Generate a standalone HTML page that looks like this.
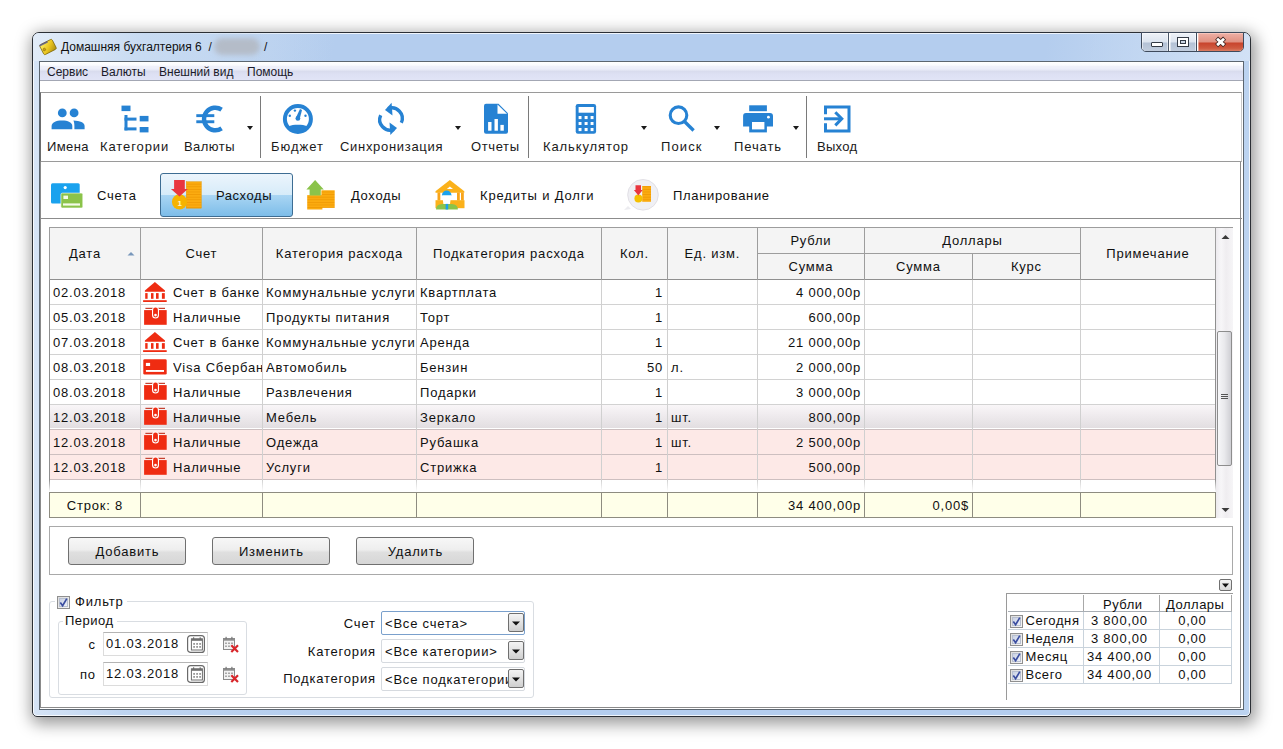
<!DOCTYPE html>
<html><head><meta charset="utf-8">
<style>
*{margin:0;padding:0;box-sizing:border-box}
html,body{width:1283px;height:749px;overflow:hidden;background:#fff;font-family:"Liberation Sans",sans-serif;color:#111}
.a{position:absolute}
.t{position:absolute;white-space:nowrap;line-height:1}
#win{left:32px;top:32px;width:1219px;height:685px;border:1px solid #2b2f35;border-radius:7px 7px 5px 5px;
 background:linear-gradient(90deg,#d6e4f6 0,#bed4f0 90px,#b4cdee 300px,#b4cdee 1050px,#bcd3f0 1219px);
 box-shadow:2px 4px 16px 3px rgba(0,0,0,.40),inset 0 0 0 1px rgba(255,255,255,.8)}
#tbar{left:33px;top:33px;width:1217px;height:28px;border-radius:6px 6px 0 0;background:linear-gradient(100deg,#e2ecf8 0,#c8dbf2 110px,rgba(180,205,238,0) 300px,rgba(180,205,238,0) 1000px,#c4d8f2 1110px,#d4e3f6 1217px)}
#client{left:39px;top:61px;width:1205px;height:649px;background:#fff;border:1px solid #5c6670}
.menu{left:40px;top:62px;width:1203px;height:19px;background:linear-gradient(#fff 0,#fafbfe 3px,#f0f1fa 4.5px,#eceefa 7px,#d9dcee 9.5px,#dde0f3 12px,#e1e4f6 18px);border-bottom:1px solid #a3a7b4}
.m{font-size:12px;top:66px;color:#1b1b2a}
.tb{left:40px;top:92px;width:1202px;height:70px;border-top:1px solid #9a9a9a;border-bottom:1px solid #9a9a9a;border-left:1px solid #6c6c6c;border-right:1px solid #c8c8c8}
.tl{font-size:13px;letter-spacing:.6px;top:140px;color:#1a1a1a}
.sep{width:1px;background:#7a7a7a;top:96px;height:62px}
.dd{width:0;height:0;border-left:3.5px solid transparent;border-right:3.5px solid transparent;border-top:4px solid #1a1a1a;top:126px}
.tabl{font-size:13px;letter-spacing:.6px;top:189px;color:#111}
</style></head><body>
<div id="win" class="a"></div>
<div id="tbar" class="a"></div>
<div id="client" class="a"></div>
<div class="a" style="left:40px;top:162px;width:1201px;height:546px;border:1px solid #8a8a8a;border-top:none"></div>

<!-- title bar -->
<svg class="a" style="left:38px;top:37px" width="22" height="20" viewBox="0 0 22 20">
 <defs><linearGradient id="wg" x1="0" y1="0" x2="1" y2="1"><stop offset="0" stop-color="#fff36a"/><stop offset=".55" stop-color="#e9c41e"/><stop offset="1" stop-color="#a88a0e"/></linearGradient></defs>
 <g transform="rotate(-27 10 10)"><rect x="3" y="4.5" width="14" height="11" rx="1.5" fill="url(#wg)" stroke="#7a6408" stroke-width=".7"/>
 <rect x="3" y="4.3" width="9" height="1.6" fill="#45489a" opacity=".75"/><circle cx="5.6" cy="10.6" r="1.4" fill="#c9a010" stroke="#8a6d10" stroke-width=".5"/></g>
</svg>
<div class="t" style="left:61px;top:41px;font-size:12px;color:#111">Домашняя бухгалтерия 6&nbsp; /</div>
<div class="a" style="left:214px;top:38px;width:46px;height:17px;border-radius:9px;background:#b4bcc8;filter:blur(2.5px)"></div>
<div class="t" style="left:264px;top:41px;font-size:12px;color:#111">/</div>

<!-- caption buttons -->
<div class="a" style="left:1141px;top:32px;width:103px;height:20px;border:1px solid #3e4a5c;border-radius:0 0 5px 5px;overflow:hidden;background:#fff">
  <div class="a" style="left:0;top:0;width:27px;height:19px;background:linear-gradient(#eef2f8,#dce4ef 48%,#b3c1d5 52%,#c3cfdf);border-right:1px solid #4a5668;box-shadow:inset 0 0 0 1px rgba(255,255,255,.5)"></div>
  <div class="a" style="left:28px;top:0;width:27px;height:19px;background:linear-gradient(#eef2f8,#dce4ef 48%,#b3c1d5 52%,#c3cfdf);border-right:1px solid #3e4a5c;box-shadow:inset 0 0 0 1px rgba(255,255,255,.5)"></div>
  <div class="a" style="left:56px;top:0;width:47px;height:19px;background:linear-gradient(#eeb0a6,#e09080 48%,#c8432c 52%,#cf5a40 80%,#de8a70);box-shadow:inset 0 0 0 1px rgba(255,220,210,.5)"></div>
</div>
<div class="a" style="left:1151px;top:42px;width:12px;height:5px;background:#fff;border:1px solid #333a45;border-radius:1px"></div>
<div class="a" style="left:1177px;top:37px;width:12px;height:10px;background:#fff;border:1px solid #333a45"></div>
<div class="a" style="left:1180px;top:40px;width:6px;height:4px;background:#c9d4e2;border:1px solid #333a45"></div>
<svg class="a" style="left:1211px;top:32.5px" width="20" height="18" viewBox="0 0 20 18">
 <path d="M5.6 5.2 L13.6 12.6 M13.6 5.2 L5.6 12.6" stroke="#3c2420" stroke-width="4.4"/>
 <path d="M6.1 5.7 L13.1 12.1 M13.1 5.7 L6.1 12.1" stroke="#fff" stroke-width="2.8"/>
</svg>

<!-- menu -->
<div class="a menu"></div>
<div class="t m" style="left:47px">Сервис</div>
<div class="t m" style="left:101px">Валюты</div>
<div class="t m" style="left:159px">Внешний вид</div>
<div class="t m" style="left:247px">Помощь</div>

<!-- toolbar -->
<div class="a tb"></div>
<div class="a sep" style="left:260px"></div>
<div class="a sep" style="left:528px"></div>
<div class="a sep" style="left:806px"></div>
<div class="a dd" style="left:247px"></div>
<div class="a dd" style="left:455px"></div>
<div class="a dd" style="left:641px"></div>
<div class="a dd" style="left:714px"></div>
<div class="a dd" style="left:793px"></div>

<svg class="a" style="left:0;top:0" width="870" height="140" viewBox="0 0 870 140" fill="#2682d3">
 <!-- people -->
 <circle cx="62.3" cy="112.9" r="4.4"/><circle cx="74.1" cy="112.9" r="4.4"/>
 <path d="M51.6 129.3 V126 C51.6 122.5 56 120.5 62 120.5 C68 120.5 72.3 122.5 72.3 126 V129.3Z"/>
 <path d="M73.4 120.6 C80 120.8 84.6 122.8 84.6 126 V129.3 H74.4 V126 C74.4 123.6 74 121.8 73.4 120.6Z"/>
 <!-- categories -->
 <rect x="121.5" y="105.6" width="9" height="5.5"/>
 <rect x="124.5" y="115" width="3" height="15.4"/>
 <rect x="124.5" y="117.6" width="12" height="3"/>
 <rect x="124.5" y="127.4" width="12" height="3"/>
 <rect x="139.7" y="115.9" width="8.8" height="5.5"/>
 <rect x="139.7" y="127" width="8.8" height="5.4"/>
 <!-- euro -->
 <path d="M221.6 109.6 A11.3 11.3 0 1 0 221.6 128.4" fill="none" stroke="#2682d3" stroke-width="4.4"/>
 <rect x="196.3" y="114.2" width="18" height="2.9"/>
 <rect x="196.3" y="120.3" width="18" height="2.9"/>
 <!-- gauge -->
 <circle cx="297.9" cy="119" r="13" fill="none" stroke="#2682d3" stroke-width="4"/>
 <path d="M287.5 127 C291 125 294.5 124.8 297.9 124.8 C301.3 124.8 304.8 125 308.3 127 A13 13 0 0 1 287.5 127Z"/>
 <circle cx="289.8" cy="115.7" r="1.2"/><circle cx="294.9" cy="110.6" r="1.2"/><circle cx="305.5" cy="115.7" r="1.2"/>
 <path d="M300 109 L302 110 L299.8 118.5 L296 117.6Z"/><circle cx="297.9" cy="118.4" r="2.4"/>
 <!-- sync -->
 <path d="M401.3 122.8 A10.5 10.5 0 0 0 388 108.6" fill="none" stroke="#2682d3" stroke-width="3.4"/>
 <path d="M391.6 102.8 L385 110 L392.5 115.5Z"/>
 <path d="M380.7 115.2 A10.5 10.5 0 0 0 394 129.4" fill="none" stroke="#2682d3" stroke-width="3.4"/>
 <path d="M390.4 135 L397 128 L389.5 122.5Z"/>
 <!-- report -->
 <path d="M486 103.8 H498.5 L508 113.3 V131.7 A2 2 0 0 1 506 133.7 H486 A2 2 0 0 1 484 131.7 V105.8 A2 2 0 0 1 486 103.8Z"/>
 <path d="M497.5 104.5 V113.8 H507Z" fill="#fff"/>
 <rect x="488.1" y="122" width="3.4" height="8.7" fill="#fff"/><rect x="494.5" y="119" width="3.4" height="11.7" fill="#fff"/><rect x="500.4" y="124.9" width="3.4" height="5.8" fill="#fff"/>
 <!-- calculator -->
 <rect x="575.7" y="104" width="20.4" height="29.8" rx="2.2"/>
 <g fill="#fff"><rect x="578.6" y="107" width="15.3" height="5.7"/>
 <rect x="578.6" y="116" width="2.9" height="3.1"/><rect x="584.6" y="116" width="3" height="3.1"/><rect x="590.6" y="116" width="2.9" height="3.1"/>
 <rect x="578.6" y="122" width="2.9" height="3"/><rect x="584.6" y="122" width="3" height="3"/><rect x="590.6" y="122" width="2.9" height="3"/>
 <rect x="578.6" y="128" width="2.9" height="3.1"/><rect x="584.6" y="128" width="3" height="3.1"/><rect x="590.6" y="128" width="2.9" height="3.1"/></g>
 <!-- search -->
 <circle cx="678.5" cy="115.2" r="8.3" fill="none" stroke="#2682d3" stroke-width="3.1"/>
 <path d="M684.5 121.5 L693.6 130.5" stroke="#2682d3" stroke-width="3.3"/>
 <!-- printer -->
 <rect x="749.2" y="105.3" width="17.7" height="5.9"/>
 <path d="M746 113 H770 A3 3 0 0 1 773 116 V126.4 H743.1 V116 A3 3 0 0 1 746 113Z"/>
 <rect x="749.2" y="120.8" width="17.7" height="11.6"/>
 <rect x="752" y="122" width="12.4" height="7.4" fill="#fff"/>
 <circle cx="768.4" cy="117.2" r="1.4" fill="#fff"/>
 <!-- exit -->
 <path d="M825.5 114.2 V107.1 H849 V130.9 H825.5 V123.3" fill="none" stroke="#2682d3" stroke-width="3"/>
 <path d="M824 118.8 H841" stroke="#2682d3" stroke-width="3"/>
 <path d="M835.3 112.2 L841.8 118.8 L835.3 125.4" fill="none" stroke="#2682d3" stroke-width="3"/>
</svg>

<div class="t tl" style="left:47px;letter-spacing:0.4px">Имена</div>
<div class="t tl" style="left:100px;letter-spacing:0.9px">Категории</div>
<div class="t tl" style="left:184px;letter-spacing:0.45px">Валюты</div>
<div class="t tl" style="left:271px;letter-spacing:1.0px">Бюджет</div>
<div class="t tl" style="left:340px;letter-spacing:0.69px">Синхронизация</div>
<div class="t tl" style="left:471px;letter-spacing:0.61px">Отчеты</div>
<div class="t tl" style="left:543px;letter-spacing:0.89px">Калькулятор</div>
<div class="t tl" style="left:661px;letter-spacing:1.1px">Поиск</div>
<div class="t tl" style="left:734px;letter-spacing:0.88px">Печать</div>
<div class="t tl" style="left:817px;letter-spacing:0.3px">Выход</div>

<!-- tabs -->
<div class="a" style="left:40px;top:218px;width:1202px;height:1px;background:#8c8c8c"></div>
<div class="a" style="left:160px;top:173px;width:133px;height:44px;border:1px solid #3d6d93;border-radius:3px;background:linear-gradient(#ecf5fc,#d6ebf9 50%,#a9d5f3 51%,#7dbde9)"></div>
<div class="t tabl" style="left:97px;letter-spacing:0.79px">Счета</div>
<div class="t tabl" style="left:216px;letter-spacing:0.55px">Расходы</div>
<div class="t tabl" style="left:351px;letter-spacing:0.67px">Доходы</div>
<div class="t tabl" style="left:480px;letter-spacing:0.83px">Кредиты и Долги</div>
<div class="t tabl" style="left:673px;letter-spacing:0.67px">Планирование</div>

<svg class="a" style="left:0;top:170px" width="700" height="45" viewBox="0 170 700 45">
 <defs><pattern id="stripes" width="4" height="2.6" patternUnits="userSpaceOnUse"><rect width="4" height="2.6" fill="#fbab10"/><rect y="2" width="4" height=".6" fill="#ec9400"/></pattern></defs>
 <!-- accounts -->
 <rect x="51" y="183.2" width="28.7" height="20.4" rx="1.5" fill="#1aa2ee"/>
 <circle cx="65.2" cy="187.6" r="1.6" fill="#fff"/>
 <rect x="60.9" y="193.1" width="21.9" height="14.9" rx="1.5" fill="#8bc34a" stroke="#fff" stroke-width=".6"/>
 <rect x="63.4" y="195.6" width="4.6" height="3.4" fill="#f4fbe8"/>
 <rect x="63" y="203.4" width="17" height="2.2" fill="#f4fbe8"/>
 <!-- expenses -->
 <g stroke="#e49a00" stroke-width=".4">
 <rect x="186.2" y="181.7" width="15.2" height="26.5" fill="url(#stripes)"/>
 </g>
 <circle cx="179.5" cy="201.8" r="7.6" fill="#f6b300"/>
 <path d="M174.1 180.1 H184.8 V189 H187.8 L179.5 196.4 L170.9 189 H174.1Z" fill="#e9363f"/>
 <text x="177.6" y="206" font-size="8" font-weight="bold" fill="#fff3c8" font-family="Liberation Sans">1</text>
 <!-- income -->
 <rect x="321.4" y="190.3" width="13.3" height="17.6" fill="url(#stripes)"/>
 <rect x="307.2" y="195.1" width="15.2" height="14.4" fill="url(#stripes)"/>
 <path d="M315.1 180.1 L323.8 189.5 H320.8 V195.4 H309.6 V189.5 H306.4Z" fill="#8bc34a"/>
 <!-- credit -->
 <path d="M449.9 179.9 L464.3 191.2 V192.8 H435.5 V191.2Z" fill="#fbb11a"/>
 <path d="M449.9 186.5 L453 189 H446.8Z" fill="#fff"/>
 <g fill="#f8a41a"><rect x="437.5" y="192.5" width="2.8" height="8"/><rect x="457" y="192.5" width="2.8" height="8"/><rect x="461" y="192.5" width="2.8" height="8"/></g>
 <rect x="435.5" y="200.2" width="29" height="8" fill="#fbb11a"/>
 <path d="M441.9 195.4 A4.8 4.8 0 0 1 451.5 195.4Z" fill="#1aa2ee"/>
 <path d="M442.3 195.4 H451.1 L450 204 H443.4Z" fill="#fff"/>
 <path d="M436 209.5 C436 205 440 203.9 443.5 203.9 H450.5 C454 203.9 457.9 205 457.9 209.5Z" fill="#8bc34a"/>
 <rect x="445.6" y="203.9" width="2.6" height="5.6" fill="#1aa2ee"/>
 <!-- planning -->
 <circle cx="643" cy="194.8" r="15.3" fill="#f0f0f4" stroke="#e2e0e6" stroke-width="1"/>
 <path d="M628 206 L624 210 L631 209Z" fill="#ececf0"/>
 <rect x="642.2" y="186" width="8.8" height="15.8" fill="url(#stripes)"/>
 <circle cx="638.4" cy="198.5" r="4" fill="#f5c000"/>
 <path d="M635.5 185.2 H641 V190 H642.7 L638.3 195.4 L633.9 190 H635.5Z" fill="#e9363f"/>
</svg>

<style>.g{position:absolute;white-space:nowrap;line-height:1;font-size:13px;letter-spacing:0.8px;color:#101010}.gc{text-align:center}.gr{text-align:right}</style>
<div class="a" style="left:49px;top:227px;width:1184px;height:291px;background:#fff"></div>
<div class="a" style="left:49px;top:227px;width:1167px;height:53px;background:#f4f4f4"></div>
<div class="a" style="left:50px;top:404px;width:1165px;height:24px;background:linear-gradient(#f9f6f8,#f0ecef 40%,#e2dee1);border-top:1px solid #bdb8bc"></div>
<div class="a" style="left:50px;top:430px;width:1165px;height:24px;background:#fde9e7"></div>
<div class="a" style="left:50px;top:455px;width:1165px;height:24px;background:#fde9e7"></div>
<div class="a" style="left:49px;top:492px;width:1167px;height:26px;background:#ffffe9;border-top:1px solid #8e8c80;border-bottom:1px solid #8e8c80"></div>
<div class="a" style="left:49px;top:227px;width:1184px;height:1px;background:#9d9d9d"></div>
<div class="a" style="left:757px;top:253px;width:323px;height:1px;background:#9d9d9d"></div>
<div class="a" style="left:49px;top:279px;width:1167px;height:1px;background:#8f8f8f"></div>
<div class="a" style="left:49px;top:304px;width:1167px;height:1px;background:#d2d2d2"></div>
<div class="a" style="left:49px;top:329px;width:1167px;height:1px;background:#d2d2d2"></div>
<div class="a" style="left:49px;top:354px;width:1167px;height:1px;background:#d2d2d2"></div>
<div class="a" style="left:49px;top:379px;width:1167px;height:1px;background:#d2d2d2"></div>
<div class="a" style="left:49px;top:404px;width:1167px;height:1px;background:#d2d2d2"></div>
<div class="a" style="left:49px;top:429px;width:1167px;height:1px;background:#cdbfc0"></div>
<div class="a" style="left:49px;top:454px;width:1167px;height:1px;background:#cdbfc0"></div>
<div class="a" style="left:49px;top:479px;width:1167px;height:1px;background:#cdbfc0"></div>
<div class="a" style="left:49px;top:227px;width:1px;height:53px;background:#9d9d9d"></div>
<div class="a" style="left:49px;top:280px;width:1px;height:200px;background:#8f8f8f"></div>
<div class="a" style="left:49px;top:480px;width:1px;height:12px;background:linear-gradient(#8f8f8f,#fff)"></div>
<div class="a" style="left:49px;top:492px;width:1px;height:26px;background:#8e8c80"></div>
<div class="a" style="left:140px;top:227px;width:1px;height:53px;background:#9d9d9d"></div>
<div class="a" style="left:140px;top:280px;width:1px;height:200px;background:#d0d0d0"></div>
<div class="a" style="left:140px;top:480px;width:1px;height:12px;background:linear-gradient(#d0d0d0,#fff)"></div>
<div class="a" style="left:140px;top:492px;width:1px;height:26px;background:#8e8c80"></div>
<div class="a" style="left:262px;top:227px;width:1px;height:53px;background:#9d9d9d"></div>
<div class="a" style="left:262px;top:280px;width:1px;height:200px;background:#d0d0d0"></div>
<div class="a" style="left:262px;top:480px;width:1px;height:12px;background:linear-gradient(#d0d0d0,#fff)"></div>
<div class="a" style="left:262px;top:492px;width:1px;height:26px;background:#8e8c80"></div>
<div class="a" style="left:416px;top:227px;width:1px;height:53px;background:#9d9d9d"></div>
<div class="a" style="left:416px;top:280px;width:1px;height:200px;background:#d0d0d0"></div>
<div class="a" style="left:416px;top:480px;width:1px;height:12px;background:linear-gradient(#d0d0d0,#fff)"></div>
<div class="a" style="left:416px;top:492px;width:1px;height:26px;background:#8e8c80"></div>
<div class="a" style="left:601px;top:227px;width:1px;height:53px;background:#9d9d9d"></div>
<div class="a" style="left:601px;top:280px;width:1px;height:200px;background:#d0d0d0"></div>
<div class="a" style="left:601px;top:480px;width:1px;height:12px;background:linear-gradient(#d0d0d0,#fff)"></div>
<div class="a" style="left:601px;top:492px;width:1px;height:26px;background:#8e8c80"></div>
<div class="a" style="left:667px;top:227px;width:1px;height:53px;background:#9d9d9d"></div>
<div class="a" style="left:667px;top:280px;width:1px;height:200px;background:#d0d0d0"></div>
<div class="a" style="left:667px;top:480px;width:1px;height:12px;background:linear-gradient(#d0d0d0,#fff)"></div>
<div class="a" style="left:667px;top:492px;width:1px;height:26px;background:#8e8c80"></div>
<div class="a" style="left:757px;top:227px;width:1px;height:53px;background:#9d9d9d"></div>
<div class="a" style="left:757px;top:280px;width:1px;height:200px;background:#d0d0d0"></div>
<div class="a" style="left:757px;top:480px;width:1px;height:12px;background:linear-gradient(#d0d0d0,#fff)"></div>
<div class="a" style="left:757px;top:492px;width:1px;height:26px;background:#8e8c80"></div>
<div class="a" style="left:864px;top:227px;width:1px;height:53px;background:#9d9d9d"></div>
<div class="a" style="left:864px;top:280px;width:1px;height:200px;background:#d0d0d0"></div>
<div class="a" style="left:864px;top:480px;width:1px;height:12px;background:linear-gradient(#d0d0d0,#fff)"></div>
<div class="a" style="left:864px;top:492px;width:1px;height:26px;background:#8e8c80"></div>
<div class="a" style="left:972px;top:253px;width:1px;height:27px;background:#9d9d9d"></div>
<div class="a" style="left:972px;top:280px;width:1px;height:200px;background:#d0d0d0"></div>
<div class="a" style="left:972px;top:480px;width:1px;height:12px;background:linear-gradient(#d0d0d0,#fff)"></div>
<div class="a" style="left:972px;top:492px;width:1px;height:26px;background:#8e8c80"></div>
<div class="a" style="left:1080px;top:227px;width:1px;height:53px;background:#9d9d9d"></div>
<div class="a" style="left:1080px;top:280px;width:1px;height:200px;background:#d0d0d0"></div>
<div class="a" style="left:1080px;top:480px;width:1px;height:12px;background:linear-gradient(#d0d0d0,#fff)"></div>
<div class="a" style="left:1080px;top:492px;width:1px;height:26px;background:#8e8c80"></div>
<div class="a" style="left:1215px;top:227px;width:1px;height:53px;background:#9d9d9d"></div>
<div class="a" style="left:1215px;top:280px;width:1px;height:200px;background:#8f8f8f"></div>
<div class="a" style="left:1215px;top:480px;width:1px;height:12px;background:linear-gradient(#8f8f8f,#fff)"></div>
<div class="a" style="left:1215px;top:492px;width:1px;height:26px;background:#8e8c80"></div>
<div class="g" style="left:69px;top:246.99px">Дата</div>
<svg class="a" style="left:127px;top:251px" width="8" height="5"><path d="M0.5 4.5 L4 1 L7.5 4.5Z" fill="#7897bb"/></svg>
<div class="g gc" style="left:140px;width:122px;top:246.99px;padding-left:0.8px">Счет</div>
<div class="g gc" style="left:262px;width:154px;top:246.99px;padding-left:0.8px">Категория расхода</div>
<div class="g gc" style="left:416px;width:185px;top:246.99px;padding-left:0.8px">Подкатегория расхода</div>
<div class="g gc" style="left:601px;width:66px;top:246.99px;padding-left:0.8px">Кол.</div>
<div class="g gc" style="left:667px;width:90px;top:246.99px;padding-left:0.8px">Ед. изм.</div>
<div class="g gc" style="left:757px;width:107px;top:233.99px;padding-left:0.8px">Рубли</div>
<div class="g gc" style="left:757px;width:107px;top:259.99px;padding-left:0.8px">Сумма</div>
<div class="g gc" style="left:864px;width:216px;top:233.99px;padding-left:0.8px">Доллары</div>
<div class="g gc" style="left:864px;width:108px;top:259.99px;padding-left:0.8px">Сумма</div>
<div class="g gc" style="left:972px;width:108px;top:259.99px;padding-left:0.8px">Курс</div>
<div class="g gc" style="left:1080px;width:135px;top:246.99px;padding-left:0.8px">Примечание</div>
<div class="g" style="left:53px;top:285.99px">02.03.2018</div>
<svg class="a" style="left:143px;top:280px" width="24" height="24" viewBox="0 0 24 24" fill="#ef2c12"><path d="M11.9 2 L22 10.6 V11.7 H1.9 V10.6Z"/><rect x="2.2" y="13.1" width="2.4" height="5.7"/><rect x="8" y="13.1" width="2.5" height="5.7"/><rect x="13" y="13.1" width="2.6" height="5.7"/><rect x="18.9" y="13.1" width="2.9" height="5.7"/><rect x="0.1" y="20.2" width="23.6" height="1.8"/></svg>
<div class="a" style="left:173px;top:283.99px;width:89px;height:18px;overflow:hidden"><div class="g" style="left:0;top:2px">Счет в банке</div></div>
<div class="a" style="left:266px;top:283.99px;width:150px;height:18px;overflow:hidden"><div class="g" style="left:0;top:2px">Коммунальные услуги</div></div>
<div class="g" style="left:420px;top:285.99px">Квартплата</div>
<div class="g gr" style="left:463px;width:200px;top:285.99px">1</div>
<div class="g gr" style="left:661px;width:200px;top:285.99px">4 000,00р</div>
<div class="g" style="left:53px;top:310.99px">05.03.2018</div>
<svg class="a" style="left:143px;top:305px" width="24" height="24" viewBox="0 0 24 24" fill="#ef2c12"><rect x="2.4" y="2.8" width="19.6" height="1.1" fill="#c0301c"/><rect x="1.1" y="5.1" width="22.6" height="14.7"/><rect x="9" y="1.5" width="7" height="12" rx="3.5" fill="#fff"/><rect x="10.1" y="2.5" width="4.8" height="10" rx="2.4"/><circle cx="12.5" cy="10.1" r="1.3" fill="#fff"/></svg>
<div class="a" style="left:173px;top:308.99px;width:89px;height:18px;overflow:hidden"><div class="g" style="left:0;top:2px">Наличные</div></div>
<div class="a" style="left:266px;top:308.99px;width:150px;height:18px;overflow:hidden"><div class="g" style="left:0;top:2px">Продукты питания</div></div>
<div class="g" style="left:420px;top:310.99px">Торт</div>
<div class="g gr" style="left:463px;width:200px;top:310.99px">1</div>
<div class="g gr" style="left:661px;width:200px;top:310.99px">600,00р</div>
<div class="g" style="left:53px;top:335.99px">07.03.2018</div>
<svg class="a" style="left:143px;top:330px" width="24" height="24" viewBox="0 0 24 24" fill="#ef2c12"><path d="M11.9 2 L22 10.6 V11.7 H1.9 V10.6Z"/><rect x="2.2" y="13.1" width="2.4" height="5.7"/><rect x="8" y="13.1" width="2.5" height="5.7"/><rect x="13" y="13.1" width="2.6" height="5.7"/><rect x="18.9" y="13.1" width="2.9" height="5.7"/><rect x="0.1" y="20.2" width="23.6" height="1.8"/></svg>
<div class="a" style="left:173px;top:333.99px;width:89px;height:18px;overflow:hidden"><div class="g" style="left:0;top:2px">Счет в банке</div></div>
<div class="a" style="left:266px;top:333.99px;width:150px;height:18px;overflow:hidden"><div class="g" style="left:0;top:2px">Коммунальные услуги</div></div>
<div class="g" style="left:420px;top:335.99px">Аренда</div>
<div class="g gr" style="left:463px;width:200px;top:335.99px">1</div>
<div class="g gr" style="left:661px;width:200px;top:335.99px">21 000,00р</div>
<div class="g" style="left:53px;top:360.99px">08.03.2018</div>
<svg class="a" style="left:143px;top:355px" width="24" height="24" viewBox="0 0 24 24" fill="#ef2c12"><rect x="0.3" y="4.2" width="23.4" height="15.3" rx="1.3"/><rect x="2.9" y="7.9" width="4.2" height="3.1" fill="#fff"/><rect x="2.9" y="15" width="18.1" height="1.9" fill="#fff"/></svg>
<div class="a" style="left:173px;top:358.99px;width:89px;height:18px;overflow:hidden"><div class="g" style="left:0;top:2px">Visa Сбербанк</div></div>
<div class="a" style="left:266px;top:358.99px;width:150px;height:18px;overflow:hidden"><div class="g" style="left:0;top:2px">Автомобиль</div></div>
<div class="g" style="left:420px;top:360.99px">Бензин</div>
<div class="g gr" style="left:463px;width:200px;top:360.99px">50</div>
<div class="g" style="left:671px;top:360.99px">л.</div>
<div class="g gr" style="left:661px;width:200px;top:360.99px">2 000,00р</div>
<div class="g" style="left:53px;top:385.99px">08.03.2018</div>
<svg class="a" style="left:143px;top:380px" width="24" height="24" viewBox="0 0 24 24" fill="#ef2c12"><rect x="2.4" y="2.8" width="19.6" height="1.1" fill="#c0301c"/><rect x="1.1" y="5.1" width="22.6" height="14.7"/><rect x="9" y="1.5" width="7" height="12" rx="3.5" fill="#fff"/><rect x="10.1" y="2.5" width="4.8" height="10" rx="2.4"/><circle cx="12.5" cy="10.1" r="1.3" fill="#fff"/></svg>
<div class="a" style="left:173px;top:383.99px;width:89px;height:18px;overflow:hidden"><div class="g" style="left:0;top:2px">Наличные</div></div>
<div class="a" style="left:266px;top:383.99px;width:150px;height:18px;overflow:hidden"><div class="g" style="left:0;top:2px">Развлечения</div></div>
<div class="g" style="left:420px;top:385.99px">Подарки</div>
<div class="g gr" style="left:463px;width:200px;top:385.99px">1</div>
<div class="g gr" style="left:661px;width:200px;top:385.99px">3 000,00р</div>
<div class="g" style="left:53px;top:410.99px">12.03.2018</div>
<svg class="a" style="left:143px;top:405px" width="24" height="24" viewBox="0 0 24 24" fill="#ef2c12"><rect x="2.4" y="2.8" width="19.6" height="1.1" fill="#c0301c"/><rect x="1.1" y="5.1" width="22.6" height="14.7"/><rect x="9" y="1.5" width="7" height="12" rx="3.5" fill="#fff"/><rect x="10.1" y="2.5" width="4.8" height="10" rx="2.4"/><circle cx="12.5" cy="10.1" r="1.3" fill="#fff"/></svg>
<div class="a" style="left:173px;top:408.99px;width:89px;height:18px;overflow:hidden"><div class="g" style="left:0;top:2px">Наличные</div></div>
<div class="a" style="left:266px;top:408.99px;width:150px;height:18px;overflow:hidden"><div class="g" style="left:0;top:2px">Мебель</div></div>
<div class="g" style="left:420px;top:410.99px">Зеркало</div>
<div class="g gr" style="left:463px;width:200px;top:410.99px">1</div>
<div class="g" style="left:671px;top:410.99px">шт.</div>
<div class="g gr" style="left:661px;width:200px;top:410.99px">800,00р</div>
<div class="g" style="left:53px;top:435.99px">12.03.2018</div>
<svg class="a" style="left:143px;top:430px" width="24" height="24" viewBox="0 0 24 24" fill="#ef2c12"><rect x="2.4" y="2.8" width="19.6" height="1.1" fill="#c0301c"/><rect x="1.1" y="5.1" width="22.6" height="14.7"/><rect x="9" y="1.5" width="7" height="12" rx="3.5" fill="#fff"/><rect x="10.1" y="2.5" width="4.8" height="10" rx="2.4"/><circle cx="12.5" cy="10.1" r="1.3" fill="#fff"/></svg>
<div class="a" style="left:173px;top:433.99px;width:89px;height:18px;overflow:hidden"><div class="g" style="left:0;top:2px">Наличные</div></div>
<div class="a" style="left:266px;top:433.99px;width:150px;height:18px;overflow:hidden"><div class="g" style="left:0;top:2px">Одежда</div></div>
<div class="g" style="left:420px;top:435.99px">Рубашка</div>
<div class="g gr" style="left:463px;width:200px;top:435.99px">1</div>
<div class="g" style="left:671px;top:435.99px">шт.</div>
<div class="g gr" style="left:661px;width:200px;top:435.99px">2 500,00р</div>
<div class="g" style="left:53px;top:460.99px">12.03.2018</div>
<svg class="a" style="left:143px;top:455px" width="24" height="24" viewBox="0 0 24 24" fill="#ef2c12"><rect x="2.4" y="2.8" width="19.6" height="1.1" fill="#c0301c"/><rect x="1.1" y="5.1" width="22.6" height="14.7"/><rect x="9" y="1.5" width="7" height="12" rx="3.5" fill="#fff"/><rect x="10.1" y="2.5" width="4.8" height="10" rx="2.4"/><circle cx="12.5" cy="10.1" r="1.3" fill="#fff"/></svg>
<div class="a" style="left:173px;top:458.99px;width:89px;height:18px;overflow:hidden"><div class="g" style="left:0;top:2px">Наличные</div></div>
<div class="a" style="left:266px;top:458.99px;width:150px;height:18px;overflow:hidden"><div class="g" style="left:0;top:2px">Услуги</div></div>
<div class="g" style="left:420px;top:460.99px">Стрижка</div>
<div class="g gr" style="left:463px;width:200px;top:460.99px">1</div>
<div class="g gr" style="left:661px;width:200px;top:460.99px">500,00р</div>
<div class="g gc" style="left:49px;width:91px;top:498.99px;padding-left:0.8px">Строк: 8</div>
<div class="g gr" style="left:661px;width:200px;top:498.99px">34 400,00р</div>
<div class="g gr" style="left:769px;width:200px;top:498.99px">0,00$</div>
<div class="a" style="left:1216px;top:228px;width:17px;height:290px;background:linear-gradient(90deg,#eceaee,#f7f6f8 30%,#efedf0 60%,#f6f5f7)"></div>
<svg class="a" style="left:1221px;top:234px" width="9" height="6"><path d="M0.5 5 L4.5 1 L8.5 5Z" fill="#3a3a3a"/></svg>
<svg class="a" style="left:1221px;top:507px" width="9" height="6"><path d="M0.5 1 L4.5 5 L8.5 1Z" fill="#3a3a3a"/></svg>
<div class="a" style="left:1217px;top:331px;width:15px;height:135px;border:1px solid #8d8d8d;border-radius:2px;background:linear-gradient(90deg,#f7f7f9,#e9e9ec 50%,#cfcfd4)"></div>
<div class="a" style="left:1221px;top:394px;width:7px;height:1px;background:#555;box-shadow:0 2px 0 #555,0 4px 0 #555"></div>
<div class="a" style="left:49px;top:526px;width:1184px;height:49px;border:1px solid #a9a9a9;background:#fff"></div>
<div class="a" style="left:68px;top:537px;width:118px;height:28px;border:1px solid #707070;border-radius:3px;background:linear-gradient(#f7f7f7,#eeeeee 45%,#dfdfdf 55%,#d6d6d6)"></div>
<div class="g gc" style="left:68px;width:118px;top:544.99px;padding-left:0.8px;font-size:13px;letter-spacing:0.8px">Добавить</div>
<div class="a" style="left:212px;top:537px;width:118px;height:28px;border:1px solid #707070;border-radius:3px;background:linear-gradient(#f7f7f7,#eeeeee 45%,#dfdfdf 55%,#d6d6d6)"></div>
<div class="g gc" style="left:212px;width:118px;top:544.99px;padding-left:0.8px;font-size:13px;letter-spacing:0.8px">Изменить</div>
<div class="a" style="left:356px;top:537px;width:118px;height:28px;border:1px solid #707070;border-radius:3px;background:linear-gradient(#f7f7f7,#eeeeee 45%,#dfdfdf 55%,#d6d6d6)"></div>
<div class="g gc" style="left:356px;width:118px;top:544.99px;padding-left:0.8px;font-size:13px;letter-spacing:0.8px">Удалить</div>
<div class="a" style="left:1219px;top:579px;width:13px;height:12px;border:1px solid #707070;border-radius:2px;background:linear-gradient(#f4f4f4,#d8d8d8)"></div>
<svg class="a" style="left:1222px;top:583px" width="7" height="5"><path d="M0 0.5 H7 L3.5 4.5Z" fill="#111"/></svg>
<div class="a" style="left:49px;top:601px;width:485px;height:97px;border:1px solid #d9dde2;border-radius:3px"></div>
<div class="a" style="left:55px;top:595px;width:72px;height:14px;background:#fff"></div>
<div class="a" style="left:57px;top:596px;width:13px;height:13px;border:1px solid #8f8f8f;background:linear-gradient(135deg,#dcdcdc,#f6f6f6)"></div>
<div class="a" style="left:59px;top:598px;width:9px;height:9px;border:1px solid #b7bfd0;background:linear-gradient(135deg,#c9d1e4,#eef1f8)"></div>
<svg class="a" style="left:57px;top:596px" width="13" height="13" viewBox="0 0 13 13"><path d="M3.3 6.6 L5.6 9.8 L9.8 2.6" fill="none" stroke="#3a4da0" stroke-width="1.7"/></svg>
<div class="g" style="left:75px;top:594.99px;font-size:13px;letter-spacing:0.8px">Фильтр</div>
<div class="a" style="left:58px;top:621px;width:189px;height:74px;border:1px solid #d9dde2;border-radius:3px"></div>
<div class="a" style="left:63px;top:614px;width:54px;height:14px;background:#fff"></div>
<div class="g" style="left:65px;top:614.49px;font-size:13px;letter-spacing:0.5px">Период</div>
<div class="g gr" style="left:-204.2px;width:300px;top:637.99px;font-size:13px;letter-spacing:0.8px">с</div>
<div class="g gr" style="left:-204.2px;width:300px;top:667.99px;font-size:13px;letter-spacing:0.8px">по</div>
<div class="a" style="left:103px;top:632px;width:105px;height:24px;border:1px solid #dcdcdc;border-top-color:#b4b4b4"></div>
<div class="g" style="left:106px;top:637.29px;font-size:13px;letter-spacing:0.8px">01.03.2018</div>
<svg class="a" style="left:187px;top:635px" width="18" height="18" viewBox="0 0 18 18"><rect x="0.6" y="0.6" width="16.8" height="16.8" rx="3" fill="#fff" stroke="#6a6a6a" stroke-width="1.2"/><rect x="4.4" y="3.8" width="11" height="11.2" fill="#fff" stroke="#6e6e6e" stroke-width="1"/><rect x="4.4" y="3.8" width="11" height="2" fill="#6e6e6e"/><rect x="6" y="2.3" width="1.2" height="2.2" fill="#6e6e6e"/><rect x="12.6" y="2.3" width="1.2" height="2.2" fill="#6e6e6e"/><g fill="#9a9a9a"><rect x="6.2" y="8" width="1.8" height="1.8"/><rect x="9.2" y="8" width="1.8" height="1.8"/><rect x="12.2" y="8" width="1.8" height="1.8"/><rect x="6.2" y="11" width="1.8" height="1.8"/><rect x="9.2" y="11" width="1.8" height="1.8"/><rect x="12.2" y="11" width="1.8" height="1.8"/></g></svg>
<svg class="a" style="left:222px;top:636px" width="18" height="17" viewBox="0 0 18 17"><rect x="1.5" y="2.5" width="11" height="11" fill="#f2f2f2" stroke="#8a8a8a"/><rect x="1.5" y="2.5" width="11" height="2.2" fill="#8d8d8d"/><rect x="3.5" y="0.8" width="1.2" height="2.5" fill="#777"/><rect x="9.3" y="0.8" width="1.2" height="2.5" fill="#777"/><g fill="#a8a8a8"><rect x="3" y="6.5" width="2" height="1.5"/><rect x="6" y="6.5" width="2" height="1.5"/><rect x="9" y="6.5" width="2" height="1.5"/><rect x="3" y="9.5" width="2" height="1.5"/><rect x="6" y="9.5" width="2" height="1.5"/></g><path d="M9.3 9.3 L16 16 M16 9.3 L9.3 16" stroke="#d8262a" stroke-width="2.2"/></svg>
<div class="a" style="left:103px;top:662px;width:105px;height:24px;border:1px solid #dcdcdc;border-top-color:#b4b4b4"></div>
<div class="g" style="left:106px;top:667.29px;font-size:13px;letter-spacing:0.8px">12.03.2018</div>
<svg class="a" style="left:187px;top:665px" width="18" height="18" viewBox="0 0 18 18"><rect x="0.6" y="0.6" width="16.8" height="16.8" rx="3" fill="#fff" stroke="#6a6a6a" stroke-width="1.2"/><rect x="4.4" y="3.8" width="11" height="11.2" fill="#fff" stroke="#6e6e6e" stroke-width="1"/><rect x="4.4" y="3.8" width="11" height="2" fill="#6e6e6e"/><rect x="6" y="2.3" width="1.2" height="2.2" fill="#6e6e6e"/><rect x="12.6" y="2.3" width="1.2" height="2.2" fill="#6e6e6e"/><g fill="#9a9a9a"><rect x="6.2" y="8" width="1.8" height="1.8"/><rect x="9.2" y="8" width="1.8" height="1.8"/><rect x="12.2" y="8" width="1.8" height="1.8"/><rect x="6.2" y="11" width="1.8" height="1.8"/><rect x="9.2" y="11" width="1.8" height="1.8"/><rect x="12.2" y="11" width="1.8" height="1.8"/></g></svg>
<svg class="a" style="left:222px;top:666px" width="18" height="17" viewBox="0 0 18 17"><rect x="1.5" y="2.5" width="11" height="11" fill="#f2f2f2" stroke="#8a8a8a"/><rect x="1.5" y="2.5" width="11" height="2.2" fill="#8d8d8d"/><rect x="3.5" y="0.8" width="1.2" height="2.5" fill="#777"/><rect x="9.3" y="0.8" width="1.2" height="2.5" fill="#777"/><g fill="#a8a8a8"><rect x="3" y="6.5" width="2" height="1.5"/><rect x="6" y="6.5" width="2" height="1.5"/><rect x="9" y="6.5" width="2" height="1.5"/><rect x="3" y="9.5" width="2" height="1.5"/><rect x="6" y="9.5" width="2" height="1.5"/></g><path d="M9.3 9.3 L16 16 M16 9.3 L9.3 16" stroke="#d8262a" stroke-width="2.2"/></svg>
<div class="g gr" style="left:75.8px;width:300px;top:616.59px;font-size:13px;letter-spacing:0.8px">Счет</div>
<div class="g gr" style="left:75.8px;width:300px;top:644.59px;font-size:13px;letter-spacing:0.8px">Категория</div>
<div class="g gr" style="left:75.8px;width:300px;top:672.39px;font-size:13px;letter-spacing:0.8px">Подкатегория</div>
<div class="a" style="left:381px;top:611px;width:144px;height:24px;border:1px solid #7aa0cc;border-radius:2px;background:#fff"></div>
<div class="a" style="left:385px;top:614.59px;width:123px;height:18px;overflow:hidden"><div class="g" style="left:0;top:2px;font-size:13px;letter-spacing:0.8px">&lt;Все счета&gt;</div></div>
<div class="a" style="left:508px;top:613px;width:16px;height:19px;border:1px solid #6f6f6f;border-radius:2px;background:linear-gradient(#f4f4f4,#e2e2e2 50%,#cfcfcf)"></div>
<svg class="a" style="left:512px;top:621px" width="8" height="5"><path d="M0 0.5 H8 L4 4.5Z" fill="#111"/></svg>
<div class="a" style="left:381px;top:639px;width:144px;height:24px;border:1px solid #d6dadf;border-radius:2px;background:#fff"></div>
<div class="a" style="left:385px;top:642.59px;width:123px;height:18px;overflow:hidden"><div class="g" style="left:0;top:2px;font-size:13px;letter-spacing:0.8px">&lt;Все категории&gt;</div></div>
<div class="a" style="left:508px;top:641px;width:16px;height:19px;border:1px solid #6f6f6f;border-radius:2px;background:linear-gradient(#f4f4f4,#e2e2e2 50%,#cfcfcf)"></div>
<svg class="a" style="left:512px;top:649px" width="8" height="5"><path d="M0 0.5 H8 L4 4.5Z" fill="#111"/></svg>
<div class="a" style="left:381px;top:667px;width:144px;height:24px;border:1px solid #d6dadf;border-radius:2px;background:#fff"></div>
<div class="a" style="left:385px;top:670.59px;width:123px;height:18px;overflow:hidden"><div class="g" style="left:0;top:2px;font-size:13px;letter-spacing:0.8px">&lt;Все подкатегории&gt;</div></div>
<div class="a" style="left:508px;top:669px;width:16px;height:19px;border:1px solid #6f6f6f;border-radius:2px;background:linear-gradient(#f4f4f4,#e2e2e2 50%,#cfcfcf)"></div>
<svg class="a" style="left:512px;top:677px" width="8" height="5"><path d="M0 0.5 H8 L4 4.5Z" fill="#111"/></svg>
<div class="a" style="left:1006px;top:593px;width:1px;height:107px;background:#9a9a9a"></div>
<div class="a" style="left:1006px;top:593px;width:227px;height:1px;background:#9a9a9a"></div>
<div class="a" style="left:1008px;top:611px;width:224px;height:1px;background:#c9d3dc"></div>
<div class="a" style="left:1008px;top:629px;width:224px;height:1px;background:#c9d3dc"></div>
<div class="a" style="left:1008px;top:647px;width:224px;height:1px;background:#c9d3dc"></div>
<div class="a" style="left:1008px;top:665px;width:224px;height:1px;background:#c9d3dc"></div>
<div class="a" style="left:1008px;top:683px;width:224px;height:1px;background:#c9d3dc"></div>
<div class="a" style="left:1083px;top:595px;width:1px;height:17px;background:#a8a8a8"></div>
<div class="a" style="left:1083px;top:612px;width:1px;height:72px;background:#c9d3dc"></div>
<div class="a" style="left:1159px;top:595px;width:1px;height:17px;background:#a8a8a8"></div>
<div class="a" style="left:1159px;top:612px;width:1px;height:72px;background:#c9d3dc"></div>
<div class="a" style="left:1231px;top:595px;width:1px;height:17px;background:#a8a8a8"></div>
<div class="a" style="left:1231px;top:612px;width:1px;height:72px;background:#c9d3dc"></div>
<div class="a" style="left:1008px;top:611px;width:224px;height:1px;background:#a8aeb4"></div>
<div class="g gc" style="left:1084.5px;width:76.0px;top:597.99px;padding-left:0.5px;font-size:13px;letter-spacing:0.5px">Рубли</div>
<div class="g gc" style="left:1159px;width:72px;top:597.99px;padding-left:0.5px;font-size:13px;letter-spacing:0.5px">Доллары</div>
<div class="a" style="left:1010px;top:615px;width:13px;height:13px;border:1px solid #8f8f8f;background:linear-gradient(135deg,#dcdcdc,#f6f6f6)"></div>
<div class="a" style="left:1012px;top:617px;width:9px;height:9px;border:1px solid #b7bfd0;background:linear-gradient(135deg,#c9d1e4,#eef1f8)"></div>
<svg class="a" style="left:1010px;top:615px" width="13" height="13" viewBox="0 0 13 13"><path d="M3.3 6.6 L5.6 9.8 L9.8 2.6" fill="none" stroke="#3a4da0" stroke-width="1.7"/></svg>
<div class="g" style="left:1025.5px;top:614.09px;font-size:13px;letter-spacing:0.6px">Сегодня</div>
<div class="g gc" style="left:1081px;width:76px;top:614.09px;padding-left:0.8px;font-size:13px;letter-spacing:0.8px">3 800,00</div>
<div class="g gc" style="left:1156px;width:72px;top:614.09px;padding-left:0.8px;font-size:13px;letter-spacing:0.8px">0,00</div>
<div class="a" style="left:1010px;top:633px;width:13px;height:13px;border:1px solid #8f8f8f;background:linear-gradient(135deg,#dcdcdc,#f6f6f6)"></div>
<div class="a" style="left:1012px;top:635px;width:9px;height:9px;border:1px solid #b7bfd0;background:linear-gradient(135deg,#c9d1e4,#eef1f8)"></div>
<svg class="a" style="left:1010px;top:633px" width="13" height="13" viewBox="0 0 13 13"><path d="M3.3 6.6 L5.6 9.8 L9.8 2.6" fill="none" stroke="#3a4da0" stroke-width="1.7"/></svg>
<div class="g" style="left:1025.5px;top:631.99px;font-size:13px;letter-spacing:0.6px">Неделя</div>
<div class="g gc" style="left:1081px;width:76px;top:631.99px;padding-left:0.8px;font-size:13px;letter-spacing:0.8px">3 800,00</div>
<div class="g gc" style="left:1156px;width:72px;top:631.99px;padding-left:0.8px;font-size:13px;letter-spacing:0.8px">0,00</div>
<div class="a" style="left:1010px;top:651px;width:13px;height:13px;border:1px solid #8f8f8f;background:linear-gradient(135deg,#dcdcdc,#f6f6f6)"></div>
<div class="a" style="left:1012px;top:653px;width:9px;height:9px;border:1px solid #b7bfd0;background:linear-gradient(135deg,#c9d1e4,#eef1f8)"></div>
<svg class="a" style="left:1010px;top:651px" width="13" height="13" viewBox="0 0 13 13"><path d="M3.3 6.6 L5.6 9.8 L9.8 2.6" fill="none" stroke="#3a4da0" stroke-width="1.7"/></svg>
<div class="g" style="left:1025.5px;top:649.89px;font-size:13px;letter-spacing:0.6px">Месяц</div>
<div class="g gc" style="left:1081px;width:76px;top:649.89px;padding-left:0.8px;font-size:13px;letter-spacing:0.8px">34 400,00</div>
<div class="g gc" style="left:1156px;width:72px;top:649.89px;padding-left:0.8px;font-size:13px;letter-spacing:0.8px">0,00</div>
<div class="a" style="left:1010px;top:669px;width:13px;height:13px;border:1px solid #8f8f8f;background:linear-gradient(135deg,#dcdcdc,#f6f6f6)"></div>
<div class="a" style="left:1012px;top:671px;width:9px;height:9px;border:1px solid #b7bfd0;background:linear-gradient(135deg,#c9d1e4,#eef1f8)"></div>
<svg class="a" style="left:1010px;top:669px" width="13" height="13" viewBox="0 0 13 13"><path d="M3.3 6.6 L5.6 9.8 L9.8 2.6" fill="none" stroke="#3a4da0" stroke-width="1.7"/></svg>
<div class="g" style="left:1025.5px;top:667.79px;font-size:13px;letter-spacing:0.6px">Всего</div>
<div class="g gc" style="left:1081px;width:76px;top:667.79px;padding-left:0.8px;font-size:13px;letter-spacing:0.8px">34 400,00</div>
<div class="g gc" style="left:1156px;width:72px;top:667.79px;padding-left:0.8px;font-size:13px;letter-spacing:0.8px">0,00</div>
</body></html>
